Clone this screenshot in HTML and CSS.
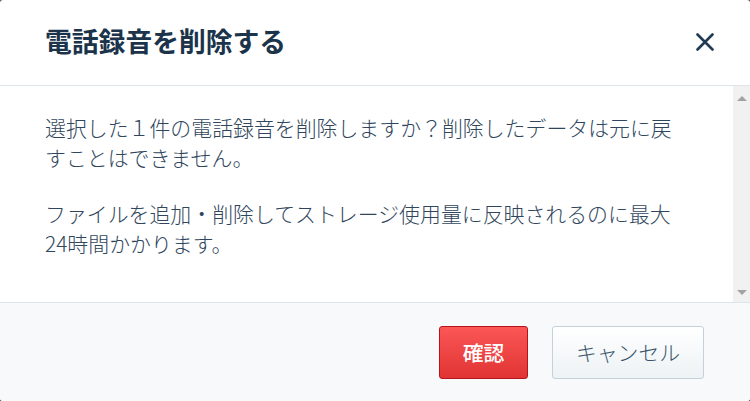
FILE: index.html
```html
<!DOCTYPE html>
<html lang="ja">
<head>
<meta charset="utf-8">
<link rel="stylesheet" href="styles.css">
</head>
<body>
<div class="dialog">
  <div class="header">
    <h1 class="title">電話録音を削除する</h1>
    <button class="close" aria-label="閉じる">
      <svg width="18" height="18" viewBox="0 0 18 18"><path d="M1.5 1.5L16.5 16.5M16.5 1.5L1.5 16.5" stroke="#1f3a52" stroke-width="2.6" stroke-linecap="round"/></svg>
    </button>
  </div>
  <div class="body">
    <div class="content">
      <p class="para">選択した１件の電話録音を削除しますか？削除したデータは元に戻すことはできません。</p>
      <p class="para">ファイルを追加・削除してストレージ使用量に反映されるのに最大24時間かかります。</p>
    </div>
    <div class="scrollbar">
      <span class="arrow up"></span>
      <span class="arrow down"></span>
    </div>
  </div>
  <div class="footer">
    <button class="btn btn-danger">確認</button>
    <button class="btn btn-default">キャンセル</button>
  </div>
</div>
</body>
</html>
```

FILE: styles.css
```css
* { box-sizing: border-box; }
html, body { margin: 0; padding: 0; }
body {
  background: #4a4f55;
  width: 750px;
  height: 401px;
  overflow: hidden;
  font-family: "Noto Sans CJK JP", "Noto Sans", sans-serif;
}
.dialog {
  width: 750px;
  height: 401px;
  background: #fff;
  border-radius: 3px;
  display: flex;
  flex-direction: column;
  overflow: hidden;
}
.header {
  height: 86px;
  flex: none;
  border-bottom: 1px solid #dfe6ea;
  display: flex;
  align-items: center;
  justify-content: space-between;
  padding: 0 36px 2px 45px;
}
.title {
  margin: 0;
  font-size: 26.8px;
  font-weight: 700;
  color: #1c344b;
  line-height: 1;
}
.close {
  border: 0;
  background: none;
  padding: 0;
  margin: 0;
  width: 18px;
  height: 18px;
  display: flex;
  margin-top: 1px;
}
.body {
  flex: 1;
  display: flex;
  min-height: 0;
}
.content {
  flex: 1;
  padding: 26px 45px 0 45px;
}
.para {
  margin: 0 0 26px 0;
  font-size: 20.9px;
  font-weight: 300;
  line-height: 30px;
  color: #2f465c;
}
.scrollbar {
  width: 17px;
  flex: none;
  background: #f1f1f1;
  display: flex;
  flex-direction: column;
  justify-content: space-between;
  align-items: center;
  padding: 10px 0 7px;
}
.arrow {
  width: 0;
  height: 0;
  border-left: 5px solid transparent;
  border-right: 5px solid transparent;
}
.arrow.up { border-bottom: 5px solid #a3a3a3; }
.arrow.down { border-top: 5px solid #a3a3a3; }
.footer {
  height: 99px;
  flex: none;
  border-top: 1px solid #dce5ea;
  background: #f7f9fb;
  display: flex;
  justify-content: flex-end;
  align-items: flex-start;
  padding: 23px 46px 0 0;
  gap: 24px;
}
.btn {
  height: 53px;
  border-radius: 3px;
  font-family: "Noto Sans CJK JP", "Noto Sans", sans-serif;
  font-size: 20.8px;
  line-height: 1;
  padding: 0;
}
.btn-danger {
  width: 89px;
  background: linear-gradient(#fb5656, #e13434);
  border: 1px solid #b5151a;
  color: #fff;
  font-weight: 500;
}
.btn-default {
  width: 152px;
  background: linear-gradient(#ffffff, #edf2f4);
  border: 1px solid #c4d1da;
  color: #3b566c;
  font-weight: 300;
}
```
